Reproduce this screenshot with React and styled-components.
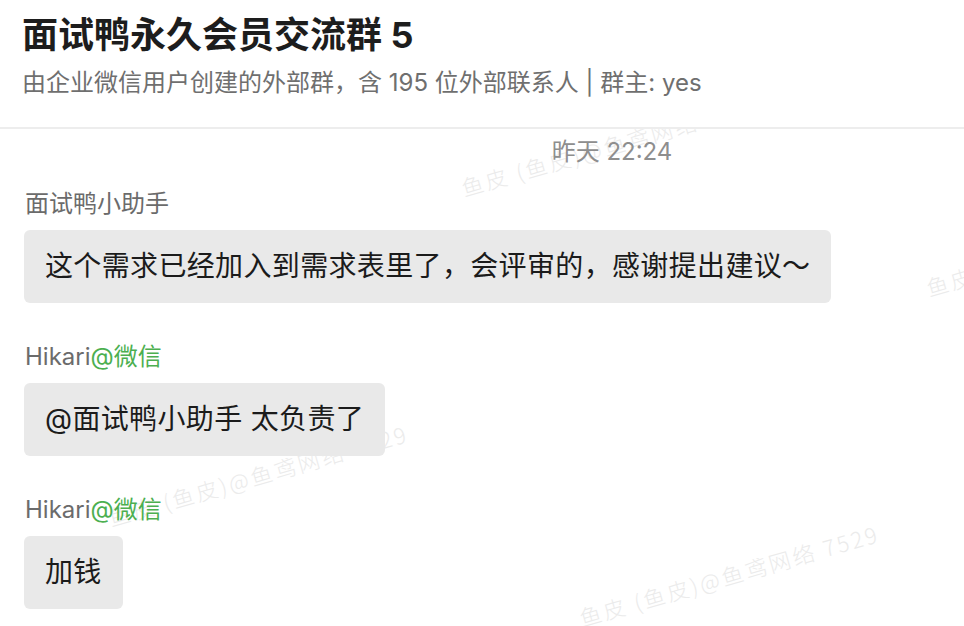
import React from 'react';
import styled, { createGlobalStyle } from 'styled-components';

const GlobalStyle = createGlobalStyle`
  html, body {
    margin: 0;
    padding: 0;
    background: #fff;
  }
  body {
    font-family: "Inter", "Noto Sans CJK SC", sans-serif;
  }
`;

const Page = styled.div`
  min-height: 100vh;
  display: flex;
  flex-direction: column;
  overflow: hidden;
`;

const Header = styled.header`
  padding: 11px 22px 28px;
  border-bottom: 2px solid #ededed;
  display: flex;
  flex-direction: column;
  gap: 8px;
`;

const Title = styled.h1`
  margin: 0;
  font-size: 36px;
  line-height: 48px;
  font-weight: 700;
  color: #1d1d1d;
`;

const Subtitle = styled.div`
  font-size: 24px;
  line-height: 32px;
  color: #6f6f6f;
`;

const Chat = styled.main`
  flex: 1;
  position: relative;
  overflow: hidden;
  padding: 7px 24px 0;
`;

const WatermarkLayer = styled.div`
  position: absolute;
  inset: 0;
  pointer-events: none;
  z-index: 0;
`;

const Watermark = styled.span`
  position: absolute;
  white-space: nowrap;
  font-family: "Noto Sans CJK SC", sans-serif;
  font-weight: 300;
  font-size: 22px;
  line-height: 26px;
  letter-spacing: 2.6px;
  color: #ebebeb;
  transform: rotate(-16deg);
  transform-origin: 0 100%;
`;

const Messages = styled.div`
  position: relative;
  z-index: 1;
  display: flex;
  flex-direction: column;
`;

const TimeRow = styled.div`
  padding-left: 260px;
  text-align: center;
  font-size: 24px;
  line-height: 32px;
  color: #8e8e8e;
  margin-bottom: 20px;
`;

const Group = styled.div`
  display: flex;
  flex-direction: column;
  align-items: flex-start;
  gap: 10px;
  margin-bottom: 38px;
`;

const Sender = styled.div`
  font-size: 24px;
  line-height: 32px;
  color: #6b6b6b;
  padding-left: 1px;
`;

const Origin = styled.span`
  color: #4caf50;
`;

const Bubble = styled.div`
  background: #e9e9e9;
  border-radius: 6px;
  padding: 16px 21px 16px 21px;
  font-size: 28px;
  line-height: 41px;
  letter-spacing: 0.35px;
  color: #1b1b1b;
`;

const marks = [
  { x: 465, y: 71 },
  { x: 930, y: 171 },
  { x: 112, y: 401 },
  { x: 583, y: 501 },
];

const messages = [
  { name: '面试鸭小助手', text: '这个需求已经加入到需求表里了，会评审的，感谢提出建议～' },
  { name: 'Hikari', origin: '@微信', text: '@面试鸭小助手 太负责了' },
  { name: 'Hikari', origin: '@微信', text: '加钱' },
];

export default function App() {
  return (
    <Page>
      <GlobalStyle />
      <Header>
        <Title>面试鸭永久会员交流群 5</Title>
        <Subtitle>由企业微信用户创建的外部群，含 195 位外部联系人 | 群主: yes</Subtitle>
      </Header>
      <Chat>
        <WatermarkLayer>
          {marks.map((m, i) => (
            <Watermark key={i} style={{ left: m.x, top: m.y - 26 }}>
              鱼皮 (鱼皮)@鱼鸢网络 7529
            </Watermark>
          ))}
        </WatermarkLayer>
        <Messages>
          <TimeRow>昨天 22:24</TimeRow>
          {messages.map((msg, i) => (
            <Group key={i}>
              <Sender>
                {msg.name}
                {msg.origin && <Origin>{msg.origin}</Origin>}
              </Sender>
              <Bubble>{msg.text}</Bubble>
            </Group>
          ))}
        </Messages>
      </Chat>
    </Page>
  );
}
